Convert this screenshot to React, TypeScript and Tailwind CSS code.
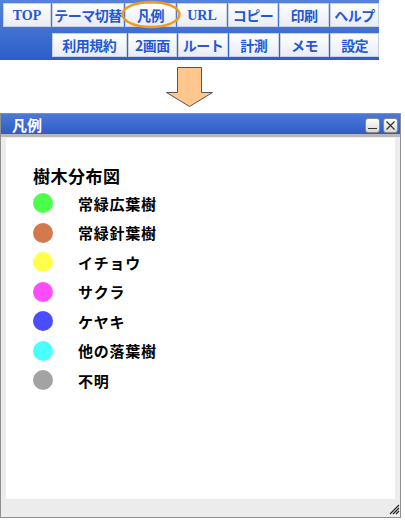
import React from "react";

type Btn = { label: string; w: string; serif?: boolean };

const row1: Btn[] = [
  { label: "TOP", w: "w-[48px]", serif: true },
  { label: "テーマ切替", w: "w-[72px]" },
  { label: "凡例", w: "w-[51px]" },
  { label: "URL", w: "w-[50px]", serif: true },
  { label: "コピー", w: "w-[50px]" },
  { label: "印刷", w: "w-[50px]" },
  { label: "ヘルプ", w: "w-[49px]" },
];

const row2: Btn[] = [
  { label: "利用規約", w: "w-[75px]" },
  { label: "2画面", w: "w-[50px]" },
  { label: "ルート", w: "w-[50px]" },
  { label: "計測", w: "w-[50px]" },
  { label: "メモ", w: "w-[50px]" },
  { label: "設定", w: "w-[49px]" },
];

const legend = [
  { name: "常緑広葉樹", color: "bg-[#4cff4c]" },
  { name: "常緑針葉樹", color: "bg-[#d27a4e]" },
  { name: "イチョウ", color: "bg-[#ffff4c]" },
  { name: "サクラ", color: "bg-[#ff4cff]" },
  { name: "ケヤキ", color: "bg-[#4c4cff]" },
  { name: "他の落葉樹", color: "bg-[#4cffff]" },
  { name: "不明", color: "bg-[#a3a3a3]" },
];

const jp = "font-['Noto_Sans_CJK_JP',sans-serif]";

function ToolButton({ b }: { b: Btn }) {
  return (
    <div
      className={`${b.w} h-[24px] flex items-center justify-center border border-[#c8d2e6] bg-gradient-to-b from-white to-[#e9ecf2] font-bold leading-none text-[#2458d6] whitespace-nowrap ${
        b.serif ? "font-['Liberation_Serif',serif] text-[14px] pt-[2px]" : `${jp} text-[14px] tracking-[-0.5px]`
      }`}
    >
      {b.label}
    </div>
  );
}

export default function App() {
  return (
    <div className="relative w-[405px] h-[521px] bg-white overflow-hidden">
      {/* toolbar */}
      <div className="w-[379px] h-[60px] flex flex-col gap-[6px] pt-[3px] bg-gradient-to-b from-[#5682dc] to-[#2d5ec8]">
        <div className="flex gap-px pl-[3px]">
          {row1.map((b) => (
            <ToolButton key={b.label} b={b} />
          ))}
        </div>
        <div className="flex gap-px pl-[52px]">
          {row2.map((b) => (
            <ToolButton key={b.label} b={b} />
          ))}
        </div>
      </div>

      {/* highlight around 凡例 */}
      <svg className="absolute left-[120px] top-0" width="64" height="30">
        <ellipse cx="31" cy="14.5" rx="28.5" ry="12.5" fill="none" stroke="#f39a1e" strokeWidth="2.5" />
      </svg>

      {/* arrow */}
      <div className="flex justify-center w-[379px] pt-[7px] h-[53px]">
        <svg width="50" height="41" viewBox="0 0 50 41">
          <path d="M12.5 0.5 H36.5 V25.5 H47.5 L24.5 39.5 L1.5 25.5 H12.5 Z" fill="#ffc68e" stroke="#555" strokeWidth="1" />
        </svg>
      </div>

      {/* window */}
      <div className="w-[401px] h-[405px] border border-[#8f8f8f] flex flex-col bg-[#ececec]">
        <div className="h-[20px] flex items-center justify-between pl-[11px] pr-[2px] bg-gradient-to-b from-[#4c79d8] to-[#2e5cc4] border-b-[3px] border-[#b8b8b8] box-content">
          <span className={`${jp} text-[15px] font-bold text-white leading-none`}>凡例</span>
          <div className="flex gap-[3px] pt-[2px]">
            <div className="w-[15px] h-[15px] rounded-[3px] border border-[#8a8a8a] bg-gradient-to-b from-white to-[#d8d8d8] flex items-end justify-center pb-[3px]">
              <div className="w-[9px] h-[1px] bg-[#333]" />
            </div>
            <div className="w-[15px] h-[15px] rounded-[3px] border border-[#8a8a8a] bg-gradient-to-b from-white to-[#d8d8d8] flex items-center justify-center">
              <svg width="9" height="9" viewBox="0 0 9 9">
                <path d="M0.5 0.5 L8.5 8.5 M8.5 0.5 L0.5 8.5" stroke="#333" strokeWidth="1.2" />
              </svg>
            </div>
          </div>
        </div>
        <div className="flex-1 flex flex-col px-[5px] pt-[1px] pb-[18px]">
          <div className="flex-1 bg-white pl-[27px] pt-[29px]">
            <h2 className={`${jp} text-[17px] font-bold text-black leading-none tracking-[0.5px] mb-[9px]`}>樹木分布図</h2>
            <div className="flex flex-col gap-[9.5px]">
              {legend.map((l) => (
                <div key={l.name} className="flex items-center h-[20px]">
                  <div className={`w-[20px] h-[20px] rounded-full ${l.color}`} />
                  <span className={`${jp} ml-[25px] text-[15px] font-bold tracking-[0.75px] text-black leading-none`}>{l.name}</span>
                </div>
              ))}
            </div>
          </div>
        </div>
        <svg className="absolute left-[389px] top-[504px]" width="11" height="11" viewBox="0 0 11 11">
          <path d="M10 1 L1 10 M10 4 L4 10 M10 7 L7 10" stroke="#222" strokeWidth="1.2" />
        </svg>
      </div>
    </div>
  );
}
